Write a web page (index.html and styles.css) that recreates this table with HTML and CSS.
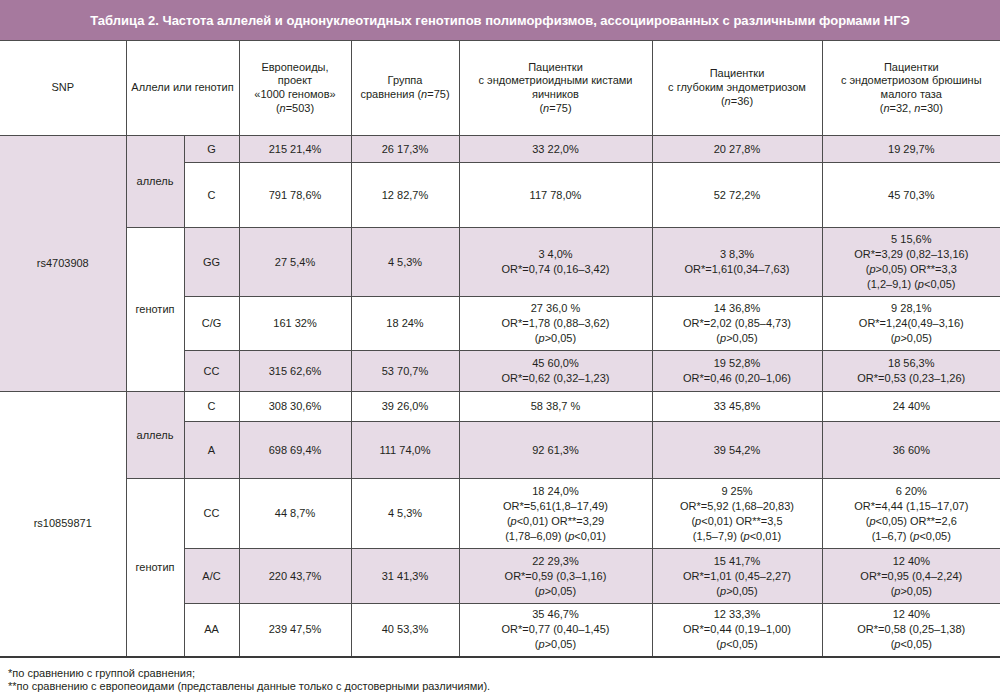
FILE: index.html
```html
<!DOCTYPE html>
<html lang="ru">
<head>
<meta charset="utf-8">
<title>Таблица 2</title>
<link rel="stylesheet" href="styles.css">
</head>
<body>
<div class="page">
<table class="grid">
  <colgroup>
    <col class="c-snp"><col class="c-kind"><col class="c-var"><col class="c-eur"><col class="c-cmp"><col class="c-p1"><col class="c-p2"><col class="c-p3">
  </colgroup>
  <thead>
    <tr class="title-row"><th colspan="8" class="title">Таблица 2. Частота аллелей и однонуклеотидных генотипов полиморфизмов, ассоциированных с различными формами НГЭ</th></tr>
    <tr class="head-row">
      <th class="edge-l">SNP</th>
      <th colspan="2">Аллели или генотип</th>
      <th>Европеоиды,<br>проект<br>«1000 геномов»<br>(<i>n</i>=503)</th>
      <th>Группа<br>сравнения (<i>n</i>=75)</th>
      <th>Пациентки<br>с эндометриоидными кистами<br>яичников<br>(<i>n</i>=75)</th>
      <th>Пациентки<br>с глубоким эндометриозом<br>(<i>n</i>=36)</th>
      <th class="edge-r">Пациентки<br>с эндометриозом брюшины<br>малого таза<br>(<i>n</i>=32, <i>n</i>=30)</th>
    </tr>
  </thead>
  <tbody>
    <tr class="r1">
      <td rowspan="5" class="edge-l sh">rs4703908</td>
      <td rowspan="2" class="sh">аллель</td>
      <td class="sh">G</td>
      <td class="sh">215 21,4%</td>
      <td class="sh">26 17,3%</td>
      <td class="sh">33 22,0%</td>
      <td class="sh">20 27,8%</td>
      <td class="sh edge-r">19 29,7%</td>
    </tr>
    <tr class="r2">
      <td>C</td>
      <td>791 78,6%</td>
      <td>12 82,7%</td>
      <td>117 78,0%</td>
      <td>52 72,2%</td>
      <td class="edge-r">45 70,3%</td>
    </tr>
    <tr class="r3">
      <td rowspan="3">генотип</td>
      <td class="sh">GG</td>
      <td class="sh">27 5,4%</td>
      <td class="sh">4 5,3%</td>
      <td class="sh">3 4,0%<br>OR*=0,74 (0,16–3,42)</td>
      <td class="sh">3 8,3%<br>OR*=1,61(0,34–7,63)</td>
      <td class="sh edge-r">5 15,6%<br>OR*=3,29 (0,82–13,16)<br>(<i>p</i>&gt;0,05) OR**=3,3<br>(1,2–9,1) (<i>p</i>&lt;0,05)</td>
    </tr>
    <tr class="r4">
      <td>C/G</td>
      <td>161 32%</td>
      <td>18 24%</td>
      <td>27 36,0 %<br>OR*=1,78 (0,88–3,62)<br>(<i>p</i>&gt;0,05)</td>
      <td>14 36,8%<br>OR*=2,02 (0,85–4,73)<br>(<i>p</i>&gt;0,05)</td>
      <td class="edge-r">9 28,1%<br>OR*=1,24(0,49–3,16)<br>(<i>p</i>&gt;0,05)</td>
    </tr>
    <tr class="r5">
      <td class="sh">CC</td>
      <td class="sh">315 62,6%</td>
      <td class="sh">53 70,7%</td>
      <td class="sh">45 60,0%<br>OR*=0,62 (0,32–1,23)</td>
      <td class="sh">19 52,8%<br>OR*=0,46 (0,20–1,06)</td>
      <td class="sh edge-r">18 56,3%<br>OR*=0,53 (0,23–1,26)</td>
    </tr>
    <tr class="r6">
      <td rowspan="5" class="edge-l">rs10859871</td>
      <td rowspan="2" class="sh">аллель</td>
      <td>C</td>
      <td>308 30,6%</td>
      <td>39 26,0%</td>
      <td>58 38,7 %</td>
      <td>33 45,8%</td>
      <td class="edge-r">24 40%</td>
    </tr>
    <tr class="r7">
      <td class="sh">A</td>
      <td class="sh">698 69,4%</td>
      <td class="sh">111 74,0%</td>
      <td class="sh">92 61,3%</td>
      <td class="sh">39 54,2%</td>
      <td class="sh edge-r">36 60%</td>
    </tr>
    <tr class="r8">
      <td rowspan="3" class="last">генотип</td>
      <td>CC</td>
      <td>44 8,7%</td>
      <td>4 5,3%</td>
      <td>18 24,0%<br>OR*=5,61(1,8–17,49)<br>(<i>p</i>&lt;0,01) OR**=3,29<br>(1,78–6,09) (<i>p</i>&lt;0,01)</td>
      <td>9 25%<br>OR*=5,92 (1,68–20,83)<br>(<i>p</i>&lt;0,01) OR**=3,5<br>(1,5–7,9) (<i>p</i>&lt;0,01)</td>
      <td class="edge-r">6 20%<br>OR*=4,44 (1,15–17,07)<br>(<i>p</i>&lt;0,05) OR**=2,6<br>(1–6,7) (<i>p</i>&lt;0,05)</td>
    </tr>
    <tr class="r9">
      <td class="sh">A/C</td>
      <td class="sh">220 43,7%</td>
      <td class="sh">31 41,3%</td>
      <td class="sh">22 29,3%<br>OR*=0,59 (0,3–1,16)<br>(<i>p</i>&gt;0,05)</td>
      <td class="sh">15 41,7%<br>OR*=1,01 (0,45–2,27)<br>(<i>p</i>&gt;0,05)</td>
      <td class="sh edge-r">12 40%<br>OR*=0,95 (0,4–2,24)<br>(<i>p</i>&gt;0,05)</td>
    </tr>
    <tr class="r10">
      <td>AA</td>
      <td>239 47,5%</td>
      <td>40 53,3%</td>
      <td>35 46,7%<br>OR*=0,77 (0,40–1,45)<br>(<i>p</i>&gt;0,05)</td>
      <td>12 33,3%<br>OR*=0,44 (0,19–1,00)<br>(<i>p</i>&lt;0,05)</td>
      <td class="edge-r">12 40%<br>OR*=0,58 (0,25–1,38)<br>(<i>p</i>&lt;0,05)</td>
    </tr>
  </tbody>
</table>
<div class="notes">
  <p>*по сравнению с группой сравнения;</p>
  <p>**по сравнению с европеоидами (представлены данные только с достоверными различиями).</p>
</div>
</div>
</body>
</html>
```

FILE: styles.css
```css
html, body {
  margin: 0;
  padding: 0;
  background: #ffffff;
}

body {
  font-family: "Liberation Sans", Arial, sans-serif;
  color: #231f20;
}

.page {
  width: 1000px;
}

.grid {
  width: 1000px;
  border-collapse: collapse;
  table-layout: fixed;
  font-size: 11px;
  line-height: 15px;
}

.c-snp { width: 126px; }
.c-kind { width: 58px; }
.c-var { width: 55px; }
.c-eur { width: 112px; }
.c-cmp { width: 108px; }
.c-p1 { width: 193px; }
.c-p2 { width: 170px; }
.c-p3 { width: 178px; }

.grid th,
.grid td {
  border: 1px solid #4d4d4d;
  padding: 0 3px;
  text-align: center;
  vertical-align: middle;
  font-weight: normal;
}

.grid .edge-l { border-left: none; }
.grid .edge-r { border-right: none; }

.grid .title {
  height: 40px;
  padding: 0;
  border: none;
  border-bottom: 1px solid #4d4d4d;
  background: #a6799e;
  color: #ffffff;
  font-weight: bold;
  font-size: 13px;
  letter-spacing: 0;
}

.head-row { height: 95px; }
.head-row th { line-height: 13.7px; }

.sh { background: #e7dbe6; }

.r1 { height: 27px; }
.r2 { height: 65px; }
.r3 { height: 69px; }
.r4 { height: 54px; }
.r5 { height: 41px; }
.r6 { height: 30px; }
.r7 { height: 57px; }
.r8 { height: 70px; }
.r9 { height: 55px; }
.r10 { height: 53px; }

.r10 td,
.grid td.last,
.r6 td.edge-l {
  border-bottom: 2px solid #3a3a3a;
}

.notes {
  padding: 9px 0 0 8px;
  font-size: 11px;
  line-height: 13px;
}

.notes p {
  margin: 0;
}
```
